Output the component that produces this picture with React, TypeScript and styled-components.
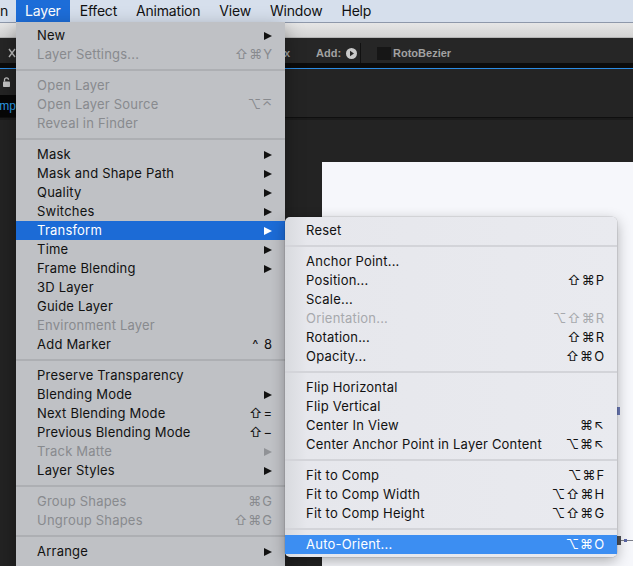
import React from 'react';
import styled, { createGlobalStyle } from 'styled-components';

const GlobalStyle = createGlobalStyle`
  html, body {
    margin: 0;
    padding: 0;
    background: #232323;
  }
  body {
    font-family: Inter, "Noto Sans", sans-serif;
    -webkit-font-smoothing: antialiased;
  }
`;

const Screen = styled.div`
  position: relative;
  width: 633px;
  height: 566px;
  overflow: hidden;
  display: flex;
  flex-direction: column;
  background: #232323;
`;

/* ---------- mac menu bar ---------- */

const MenuBar = styled.div`
  height: 22px;
  flex-shrink: 0;
  display: flex;
  background: #d6dfec;
  font-size: 14px;
  letter-spacing: -0.2px;
  color: #111;
  position: relative;
  z-index: 5;
`;

const BarItem = styled.div<{ $active?: boolean; $first?: boolean }>`
  position: relative;
  display: flex;
  align-items: center;
  padding: ${(p) => (p.$first ? '0 7px 0 0' : '0 9px')};
  margin-right: 1px;
  padding-bottom: 1px;
  background: ${(p) => (p.$active ? '#1d6dd8' : 'transparent')};
  color: ${(p) => (p.$active ? '#fff' : '#111')};
  white-space: nowrap;
`;

/* ---------- After Effects chrome behind the menu ---------- */

const TitleStrip = styled.div`
  height: 16px;
  flex-shrink: 0;
  box-sizing: border-box;
  border-top: 1px solid #8e98aa;
  border-bottom: 1px solid #b4b4b4;
  background: linear-gradient(#e6e6e6, #d3d3d3);
`;

const Toolbar = styled.div`
  height: 30px;
  flex-shrink: 0;
  display: flex;
  align-items: center;
  padding-top: 5px;
  box-sizing: border-box;
  background: #262626;
  border-bottom: 5px solid #0b0b0b;
  font-family: "Liberation Sans", Arial, sans-serif;
  font-weight: bold;
  font-size: 11px;
  color: #a2a2a2;
`;

const ToolIcon = styled.svg`
  margin-left: 8px;
  flex-shrink: 0;
`;

const StrokeField = styled.div`
  width: 273px;
  margin-left: 1px;
  display: flex;
  justify-content: flex-end;
  white-space: nowrap;
`;

const AddLabel = styled.span`
  margin-left: 26px;
`;

const PlayCircle = styled.svg`
  margin-left: 5px;
  flex-shrink: 0;
`;

const ToolDivider = styled.div`
  width: 1px;
  height: 20px;
  margin-left: 3px;
  background: #111;
`;

const CheckBox = styled.div`
  width: 14px;
  height: 13px;
  margin-left: 16px;
  background: #161616;
`;

const ToolText = styled.span`
  margin-left: 2px;
`;

const PanelHeader = styled.div`
  height: 26px;
  flex-shrink: 0;
  display: flex;
  align-items: center;
  padding-left: 3px;
  background: #242424;
  border-top: 1px solid #2b8be2;
`;

const TabRow = styled.div`
  height: 22px;
  flex-shrink: 0;
  display: flex;
  background: #242424;
  border-bottom: 1px solid #0f0f0f;
`;

const Tab = styled.div`
  display: flex;
  align-items: center;
  margin-left: -16px;
  padding: 0 10px 0 0;
  background: #070707;
  color: #2d9ce8;
  font-family: "Liberation Sans", Arial, sans-serif;
  font-size: 12px;
  width: 140px;
`;

const Viewer = styled.div`
  flex: 1;
  display: flex;
  flex-direction: column;
  padding: 42px 0 0 322px;
  background: #232323;
  border-top: 2px solid #1b1b1b;
`;

const Canvas = styled.div`
  position: relative;
  flex: 1;
  background: #f6f7fb;
`;

const CanvasMark = styled.div<{ $x: number; $y: number; $w: number; $h: number; $c: string }>`
  position: absolute;
  left: ${(p) => p.$x}px;
  top: ${(p) => p.$y}px;
  width: ${(p) => p.$w}px;
  height: ${(p) => p.$h}px;
  background: ${(p) => p.$c};
`;

/* ---------- menus ---------- */

const Dropdown = styled.div`
  position: absolute;
  top: 22px;
  left: 0;
  width: 269px;
  padding: 4px 0 30px;
  background: #bfc1c5;
  box-shadow: 0 6px 18px rgba(0, 0, 0, 0.35);
  color: #111;
  letter-spacing: 0;
`;

const Submenu = styled.div`
  position: absolute;
  top: -4px;
  left: 100%;
  width: 332px;
  padding: 4px 0 3px;
  border-radius: 5px;
  background: linear-gradient(90deg, #d8dade 0, #e6e7ec 22px, #e9eaef 100%);
  box-shadow: 0 4px 14px rgba(0, 0, 0, 0.3), 0 0 0 0.5px rgba(0, 0, 0, 0.15);
`;

const Row = styled.div<{ $active?: boolean; $disabled?: boolean; $accent: string; $muted: string }>`
  position: relative;
  box-sizing: border-box;
  height: 19px;
  display: flex;
  align-items: center;
  padding: 0 13px 2px 21px;
  font-size: 13px;
  letter-spacing: 0.2px;
  white-space: nowrap;
  color: ${(p) => (p.$active ? '#fff' : p.$disabled ? p.$muted : '#111')};
  background: ${(p) => (p.$active ? p.$accent : 'transparent')};
`;

const Label = styled.span`
  flex: 1;
`;

const Shortcut = styled.span`
  font-family: Inter, "DejaVu Sans", sans-serif;
  letter-spacing: 1px;
  margin-right: -1px;
`;

const Arrow = styled.span<{ $color: string }>`
  width: 0;
  height: 0;
  margin-top: 2px;
  border-left: 8px solid ${(p) => p.$color};
  border-top: 4.5px solid transparent;
  border-bottom: 4.5px solid transparent;
`;

const Separator = styled.div<{ $color: string }>`
  height: 2px;
  margin: 5px 0;
  background: ${(p) => p.$color};
`;

type Entry =
  | 'sep'
  | { label: string; shortcut?: string; sub?: boolean; disabled?: boolean; active?: boolean };

const layerItems: Entry[] = [
  { label: 'New', sub: true },
  { label: 'Layer Settings...', shortcut: '⇧⌘Y', disabled: true },
  'sep',
  { label: 'Open Layer', disabled: true },
  { label: 'Open Layer Source', shortcut: '⌥⌅', disabled: true },
  { label: 'Reveal in Finder', disabled: true },
  'sep',
  { label: 'Mask', sub: true },
  { label: 'Mask and Shape Path', sub: true },
  { label: 'Quality', sub: true },
  { label: 'Switches', sub: true },
  { label: 'Transform', sub: true, active: true },
  { label: 'Time', sub: true },
  { label: 'Frame Blending', sub: true },
  { label: '3D Layer' },
  { label: 'Guide Layer' },
  { label: 'Environment Layer', disabled: true },
  { label: 'Add Marker', shortcut: '^ 8' },
  'sep',
  { label: 'Preserve Transparency' },
  { label: 'Blending Mode', sub: true },
  { label: 'Next Blending Mode', shortcut: '⇧=' },
  { label: 'Previous Blending Mode', shortcut: '⇧−' },
  { label: 'Track Matte', sub: true, disabled: true },
  { label: 'Layer Styles', sub: true },
  'sep',
  { label: 'Group Shapes', shortcut: '⌘G', disabled: true },
  { label: 'Ungroup Shapes', shortcut: '⇧⌘G', disabled: true },
  'sep',
  { label: 'Arrange', sub: true },
];

const transformItems: Entry[] = [
  { label: 'Reset' },
  'sep',
  { label: 'Anchor Point...' },
  { label: 'Position...', shortcut: '⇧⌘P' },
  { label: 'Scale...' },
  { label: 'Orientation...', shortcut: '⌥⇧⌘R', disabled: true },
  { label: 'Rotation...', shortcut: '⇧⌘R' },
  { label: 'Opacity...', shortcut: '⇧⌘O' },
  'sep',
  { label: 'Flip Horizontal' },
  { label: 'Flip Vertical' },
  { label: 'Center In View', shortcut: '⌘↖' },
  { label: 'Center Anchor Point in Layer Content', shortcut: '⌥⌘↖' },
  'sep',
  { label: 'Fit to Comp', shortcut: '⌥⌘F' },
  { label: 'Fit to Comp Width', shortcut: '⌥⇧⌘H' },
  { label: 'Fit to Comp Height', shortcut: '⌥⇧⌘G' },
  'sep',
  { label: 'Auto-Orient...', shortcut: '⌥⌘O', active: true },
];

type Tone = { accent: string; muted: string; arrowMuted: string; sep: string };

const darkTone: Tone = { accent: '#1c6bd6', muted: '#888a8e', arrowMuted: '#909296', sep: '#adafb3' };
const lightTone: Tone = { accent: '#3c8ef2', muted: '#a7a9ad', arrowMuted: '#a7a9ad', sep: '#d3d4d9' };

const MenuRows: React.FC<{ items: Entry[]; tone: Tone; child?: React.ReactNode }> = ({ items, tone, child }) => (
  <>
    {items.map((it, i) => {
      if (it === 'sep') return <Separator key={i} $color={tone.sep} />;
      const arrowColor = it.active ? '#fff' : it.disabled ? tone.arrowMuted : '#111';
      return (
        <Row key={i} $active={it.active} $disabled={it.disabled} $accent={tone.accent} $muted={tone.muted}>
          <Label>{it.label}</Label>
          {it.shortcut && <Shortcut>{it.shortcut}</Shortcut>}
          {it.sub && <Arrow $color={arrowColor} />}
          {it.active && it.sub && child}
        </Row>
      );
    })}
  </>
);

const App: React.FC = () => {
  return (
    <Screen>
      <GlobalStyle />
      <MenuBar>
        <BarItem $first>n</BarItem>
        <BarItem $active>
          Layer
          <Dropdown>
            <MenuRows
              items={layerItems}
              tone={darkTone}
              child={
                <Submenu>
                  <MenuRows items={transformItems} tone={lightTone} />
                </Submenu>
              }
            />
          </Dropdown>
        </BarItem>
        <BarItem>Effect</BarItem>
        <BarItem>Animation</BarItem>
        <BarItem>View</BarItem>
        <BarItem>Window</BarItem>
        <BarItem>Help</BarItem>
      </MenuBar>

      <TitleStrip />

      <Toolbar>
        <ToolIcon width="8" height="10" viewBox="0 0 8 10">
          <path d="M1 1 L7 9 M7 1 L1 9" stroke="#bdbdbd" strokeWidth="1.4" fill="none" />
        </ToolIcon>
        <StrokeField>2 px</StrokeField>
        <AddLabel>Add:</AddLabel>
        <PlayCircle width="11" height="11" viewBox="0 0 11 11">
          <circle cx="5.5" cy="5.5" r="5.5" fill="#c9c9c9" />
          <path d="M4 2.8 L8 5.5 L4 8.2 Z" fill="#262626" />
        </PlayCircle>
        <ToolDivider />
        <CheckBox />
        <ToolText>RotoBezier</ToolText>
      </Toolbar>

      <PanelHeader>
        <svg width="7" height="10" viewBox="0 0 7 10">
          <path d="M1.5 4.5 V2.8 A2 2 0 0 1 5.5 2.8" stroke="#c4c4c4" strokeWidth="1.3" fill="none" />
          <rect x="0" y="4.5" width="7" height="5.5" rx="0.8" fill="#c4c4c4" />
        </svg>
      </PanelHeader>

      <TabRow>
        <Tab>Comp 1</Tab>
      </TabRow>

      <Viewer>
        <Canvas>
          <CanvasMark $x={295} $y={245} $w={3} $h={8} $c="#6b79b6" />
          <CanvasMark $x={294} $y={374} $w={5} $h={9} $c="#4d4f56" />
          <CanvasMark $x={299} $y={378} $w={12} $h={1} $c="#7a7d88" />
          <CanvasMark $x={302} $y={377} $w={3} $h={3} $c="#5a66a6" />
        </Canvas>
      </Viewer>
    </Screen>
  );
};

export default App;
